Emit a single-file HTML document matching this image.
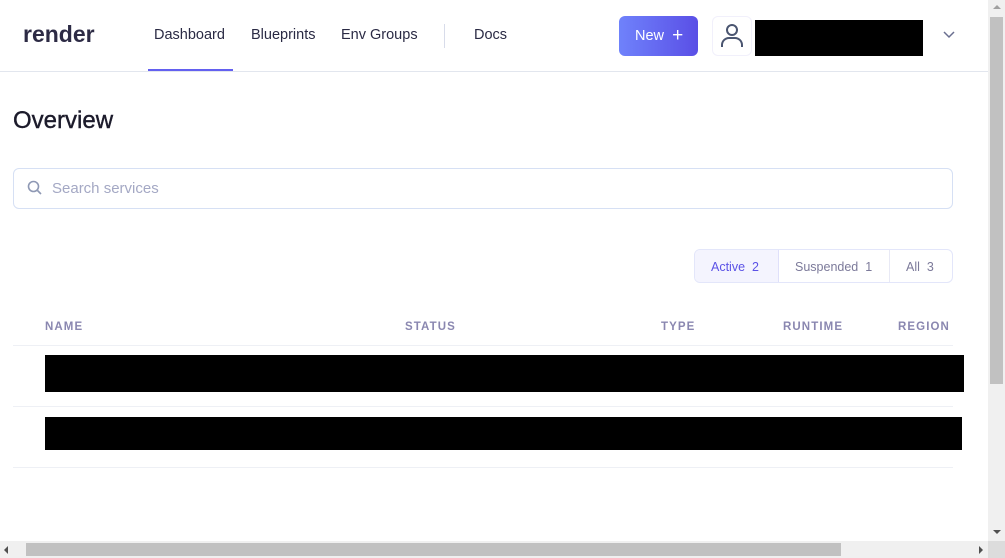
<!DOCTYPE html>
<html><head><style>
*{margin:0;padding:0;box-sizing:border-box}
body{width:1005px;height:558px;overflow:hidden;background:#fff;font-family:"Liberation Sans",sans-serif;position:relative}
.a{position:absolute}
.nav{font-size:14.5px;color:#2a2a44}
.th{font-size:11.5px;font-weight:bold;color:#8a87b0;letter-spacing:1.1px}
</style></head><body>
<div class="a" style="left:23px;top:21px;font-size:23px;font-weight:bold;color:#2d2b45">render</div>
<div class="a nav" style="left:154px;top:27px">Dashboard</div>
<div class="a nav" style="left:251px;top:27px">Blueprints</div>
<div class="a nav" style="left:341px;top:27px">Env Groups</div>
<div class="a" style="left:444px;top:24px;width:1px;height:24px;background:#d8dcea"></div>
<div class="a nav" style="left:474px;top:27px">Docs</div>
<div class="a" style="left:148px;top:69px;width:85px;height:2px;background:#6360f0"></div>
<div class="a" style="left:0;top:71px;width:988px;height:1px;background:#e2e6ee"></div>
<div class="a" style="left:619px;top:16px;width:79px;height:40px;border-radius:6px;background:linear-gradient(90deg,#6f82fb,#5a4fe6);color:#fff;font-size:14.5px;line-height:40px;padding-left:16px">New&nbsp; <span style="font-size:19px;vertical-align:-1px">+</span></div>
<div class="a" style="left:712px;top:16px;width:40px;height:40px;border:1px solid #f1f0fb;border-radius:6px"></div>
<svg class="a" style="left:719px;top:22px" width="26" height="28" viewBox="0 0 26 28"><circle cx="13" cy="8" r="5" fill="none" stroke="#4a5570" stroke-width="2"/><path d="M3 25v-2a7 7 0 0 1 7-7h6a7 7 0 0 1 7 7v2" fill="none" stroke="#4a5570" stroke-width="2"/></svg>
<div class="a" style="left:755px;top:20px;width:168px;height:36px;background:#000"></div>
<svg class="a" style="left:943px;top:31px" width="12" height="8"><path d="M1 1l5 5 5-5" fill="none" stroke="#6a6f90" stroke-width="1.5"/></svg>
<div class="a" style="left:13px;top:107px;font-size:24px;color:#1c1b2b;-webkit-text-stroke:0.4px #1c1b2b">Overview</div>
<div class="a" style="left:13px;top:168px;width:940px;height:41px;border:1px solid #d6e0f4;border-radius:6px"></div>
<svg class="a" style="left:27px;top:180px" width="16" height="16"><circle cx="6.5" cy="6.5" r="5" fill="none" stroke="#8e98b4" stroke-width="1.6"/><path d="M10.5 10.5l3.5 3.5" stroke="#8e98b4" stroke-width="1.6"/></svg>
<div class="a" style="left:52px;top:180px;font-size:15px;color:#a4a8c4">Search services</div>
<div class="a" style="left:694px;top:249px;width:259px;height:34px;border:1px solid #e3e6fa;border-radius:6px;overflow:hidden;font-size:12.5px;line-height:34px">
<div class="a" style="left:0;top:0;width:84px;height:32px;background:#f4f4fe;border-right:1px solid #dfe0fa;color:#5b52e6;padding-left:16px">Active&nbsp; 2</div>
<div class="a" style="left:84px;top:0;width:111px;height:32px;border-right:1px solid #e8e9f5;color:#7c7a9a;padding-left:16px">Suspended&nbsp; 1</div>
<div class="a" style="left:211px;top:0;color:#7c7a9a">All&nbsp; 3</div>
</div>
<div class="a th" style="left:45px;top:321px">NAME</div>
<div class="a th" style="left:405px;top:321px">STATUS</div>
<div class="a th" style="left:661px;top:321px">TYPE</div>
<div class="a th" style="left:783px;top:321px">RUNTIME</div>
<div class="a th" style="left:898px;top:321px">REGION</div>
<div class="a" style="left:13px;top:345px;width:940px;height:1px;background:#eef0f5"></div>
<div class="a" style="left:45px;top:355px;width:919px;height:37px;background:#000"></div>
<div class="a" style="left:13px;top:406px;width:940px;height:1px;background:#eef0f5"></div>
<div class="a" style="left:45px;top:417px;width:917px;height:33px;background:#000"></div>
<div class="a" style="left:13px;top:467px;width:940px;height:1px;background:#eef0f5"></div>
<div class="a" style="left:988px;top:0;width:17px;height:541px;background:#f0f0f0"></div>
<div class="a" style="left:990px;top:17px;width:13px;height:367px;background:#c1c1c1"></div>
<div class="a" style="left:993px;top:5px;width:0;height:0;border-left:4px solid transparent;border-right:4px solid transparent;border-bottom:4px solid #a0a0a0"></div>
<div class="a" style="left:993px;top:530px;width:0;height:0;border-left:4px solid transparent;border-right:4px solid transparent;border-top:4px solid #505050"></div>
<div class="a" style="left:0;top:541px;width:1005px;height:17px;background:#f0f0f0"></div>
<div class="a" style="left:26px;top:543px;width:815px;height:13px;background:#c1c1c1"></div>
<div class="a" style="left:4px;top:546px;width:0;height:0;border-top:4px solid transparent;border-bottom:4px solid transparent;border-right:4px solid #505050"></div>
<div class="a" style="left:979px;top:546px;width:0;height:0;border-top:4px solid transparent;border-bottom:4px solid transparent;border-left:4px solid #505050"></div>
<div class="a" style="left:988px;top:541px;width:17px;height:17px;background:#dcdcdc"></div>
</body></html>
